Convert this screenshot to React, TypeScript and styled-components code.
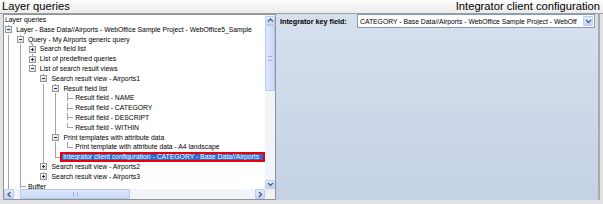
import React from 'react';
import styled, { createGlobalStyle, css } from 'styled-components';

const GlobalStyle = createGlobalStyle`
  html, body {
    margin: 0;
    padding: 0;
  }
  body {
    font-family: 'Liberation Sans', Arial, sans-serif;
    background: #e4e4e4;
  }
`;

const LINE = '#a3a3a3';
const ROW_H = 9.8;
const INDENT = 11.8;

type TreeNode = {
  label: string;
  open?: boolean;
  selected?: boolean;
  // more siblings follow below the visible part of the list
  more?: boolean;
  children?: TreeNode[];
};

const tree: TreeNode[] = [
  {
    label: 'Layer - Base Data//Airports - WebOffice Sample Project - WebOffice5_Sample',
    open: true,
    more: true,
    children: [
      {
        label: 'Query - My Airports generic query',
        open: true,
        children: [
          { label: 'Search field list', open: false, children: [] },
          { label: 'List of predefined queries', open: false, children: [] },
          {
            label: 'List of search result views',
            open: true,
            children: [
              {
                label: 'Search result view - Airports1',
                open: true,
                children: [
                  {
                    label: 'Result field list',
                    open: true,
                    children: [
                      { label: 'Result field - NAME' },
                      { label: 'Result field - CATEGORY' },
                      { label: 'Result field - DESCRIPT' },
                      { label: 'Result field - WITHIN' },
                    ],
                  },
                  {
                    label: 'Print templates with attribute data',
                    open: true,
                    children: [{ label: 'Print template with attribute data - A4 landscape' }],
                  },
                  {
                    label: 'Integrator client configuration - CATEGORY - Base Data//Airports',
                    selected: true,
                  },
                ],
              },
              { label: 'Search result view - Airports2', open: false, children: [] },
              { label: 'Search result view - Airports3', open: false, children: [] },
            ],
          },
        ],
      },
      { label: 'Buffer', more: true },
    ],
  },
];

type FlatRow = {
  node: TreeNode;
  guides: boolean[];
  hasNext: boolean;
};

function flatten(nodes: TreeNode[], guides: boolean[], out: FlatRow[]) {
  nodes.forEach((node, i) => {
    const hasNext = i < nodes.length - 1 || !!node.more;
    out.push({ node, guides, hasNext });
    if (node.open && node.children) {
      flatten(node.children, [...guides, hasNext], out);
    }
  });
  return out;
}

const rows = flatten(tree, [], []);

const Frame = styled.div`
  width: 603px;
  height: 204px;
  display: flex;
  flex-direction: column;
  background: #e2e2e2;
  overflow: hidden;
`;

const TitleBar = styled.div`
  flex: none;
  height: 13px;
  display: flex;
  justify-content: space-between;
  align-items: center;
  padding: 0 3px 0 2px;
  background: linear-gradient(#fdfdfd, #ececec);
  border-bottom: 1px solid #a0a0a0;
`;

const Title = styled.span`
  font-size: 11.2px;
  line-height: 13px;
  color: #000;
  white-space: nowrap;
`;

const Body = styled.div`
  flex: none;
  height: 186px;
  display: flex;
  padding: 0 3px 0 3px;
`;

const TreePane = styled.div`
  flex: none;
  width: 273px;
  height: 186px;
  box-sizing: border-box;
  border: 1px solid #8d939b;
  background: #fff;
  display: grid;
  grid-template-columns: minmax(0, 1fr) 10px;
  grid-template-rows: minmax(0, 1fr) 10px;
`;

const Viewport = styled.div`
  overflow: hidden;
  min-width: 0;
  min-height: 0;
`;

const Row = styled.div`
  display: flex;
  align-items: center;
  height: ${ROW_H}px;
  font-size: 6.8px;
  color: #000;
  white-space: nowrap;
`;

const Guide = styled.span<{ $line: boolean }>`
  flex: none;
  width: ${INDENT}px;
  align-self: stretch;
  ${(p) =>
    p.$line &&
    css`
      background: linear-gradient(${LINE}, ${LINE}) 4px 0 / 1px 100% no-repeat;
    `}
`;

const Branch = styled.span<{ $next: boolean; $leaf: boolean }>`
  flex: none;
  width: ${INDENT}px;
  align-self: stretch;
  display: flex;
  align-items: center;
  padding-left: 1px;
  box-sizing: border-box;
  background:
    linear-gradient(${LINE}, ${LINE}) 4px 0 / 1px 50% no-repeat,
    ${(p) => (p.$next ? `linear-gradient(${LINE}, ${LINE}) 4px 50% / 1px 50% no-repeat,` : '')}
    ${(p) => (p.$leaf ? `linear-gradient(${LINE}, ${LINE}) 4px 50% / 6px 1px no-repeat` : 'none')};
`;

const Expander = styled.span<{ $open: boolean }>`
  width: 7px;
  height: 7px;
  box-sizing: border-box;
  border: 1px solid #8e9aa8;
  background:
    linear-gradient(#24375a, #24375a) center / 3px 1px no-repeat,
    ${(p) => (p.$open ? '' : 'linear-gradient(#24375a, #24375a) center / 1px 3px no-repeat,')}
    linear-gradient(135deg, #ffffff, #d9d6cd);
`;

const Label = styled.span`
  padding-left: 0.4px;
  line-height: ${ROW_H}px;
`;

const RootLabel = styled(Label)`
  padding-left: 1px;
`;

const Selected = styled.span`
  flex: 1;
  min-width: 0;
  height: 10px;
  box-sizing: border-box;
  margin-left: -3px;
  padding-left: 1px;
  border: 2px solid #e8000b;
  background: #3169c6;
  color: #fff;
  line-height: 6px;
  overflow: hidden;
`;

const VScroll = styled.div`
  display: flex;
  flex-direction: column;
  min-height: 0;
  background: #f1f4f9;
`;

const HScroll = styled.div`
  display: flex;
  align-items: stretch;
  min-width: 0;
  background: #f1f4f9;
`;

const Corner = styled.div`
  background: #f3f1eb;
`;

const ArrowBtn = styled.div`
  flex: none;
  width: 10px;
  height: 9px;
  display: flex;
  align-items: center;
  justify-content: center;
  box-sizing: border-box;
  border: 1px solid #bccbe9;
  border-radius: 1px;
  background: linear-gradient(#e3ebfc, #c3d4f6);
`;

const Track = styled.div`
  flex: 1;
`;

const Thumb = styled.div<{ $dir: 'v' | 'h'; $offset: number; $size: number }>`
  flex: none;
  box-sizing: border-box;
  border: 1px solid #b7c8ea;
  border-radius: 1px;
  background: ${(p) =>
    p.$dir === 'v' ? 'linear-gradient(90deg, #dfe8fb, #c9d8f6)' : 'linear-gradient(#dfe8fb, #c9d8f6)'};
  display: flex;
  align-items: center;
  justify-content: center;
  ${(p) =>
    p.$dir === 'v'
      ? css`
          margin-top: ${p.$offset}px;
          height: ${p.$size}px;
        `
      : css`
          margin-left: ${p.$offset}px;
          width: ${p.$size}px;
        `}
`;

const Grip = styled.span<{ $dir: 'v' | 'h' }>`
  ${(p) =>
    p.$dir === 'v'
      ? css`
          width: 4px;
          height: 3px;
          border-top: 1px solid #9fb2d8;
          border-bottom: 1px solid #9fb2d8;
        `
      : css`
          width: 3px;
          height: 4px;
          border-left: 1px solid #9fb2d8;
          border-right: 1px solid #9fb2d8;
        `}
`;

const ConfigPane = styled.div`
  flex: 1;
  display: flex;
  flex-direction: column;
  padding: 0 3px 0 4px;
  background: linear-gradient(#d7e0ed, #c4d1e5);
  border-right: 2px solid #a9a9a9;
`;

const FieldRow = styled.div`
  display: flex;
  align-items: center;
  height: 14px;
`;

const FieldLabel = styled.span`
  flex: 1;
  font-size: 7.2px;
  font-weight: bold;
  color: #000;
  white-space: nowrap;
`;

const Select = styled.div`
  flex: none;
  width: 238px;
  height: 14px;
  box-sizing: border-box;
  border: 1px solid #7f9db9;
  background: #fff;
  display: flex;
  align-items: center;
`;

const SelectText = styled.span`
  flex: 1;
  min-width: 0;
  padding-left: 2px;
  margin-right: 4px;
  font-size: 6.8px;
  color: #000;
  white-space: nowrap;
  overflow: hidden;
`;

const DropBtn = styled(ArrowBtn)`
  margin-right: 1px;
  height: 10px;
`;

type Dir = 'up' | 'down' | 'left' | 'right';

function Chevron({ dir }: { dir: Dir }) {
  const pts: Record<Dir, string> = {
    up: '1,4.5 3.5,2 6,4.5',
    down: '1,2 3.5,4.5 6,2',
    left: '4.5,1 2,3.5 4.5,6',
    right: '2,1 4.5,3.5 2,6',
  };
  return (
    <svg width="7" height="7" viewBox="0 0 7 7">
      <polyline points={pts[dir]} fill="none" stroke="#4d6185" strokeWidth="1.4" />
    </svg>
  );
}

function TreeRow({ row }: { row: FlatRow }) {
  const { node, guides, hasNext } = row;
  const leaf = !node.children;
  return (
    <Row>
      {guides.map((g, i) => (
        <Guide key={i} $line={g} />
      ))}
      <Branch $next={hasNext} $leaf={leaf}>
        {!leaf && <Expander $open={!!node.open} />}
      </Branch>
      {node.selected ? <Selected>{node.label}</Selected> : <Label>{node.label}</Label>}
    </Row>
  );
}

export default function App() {
  return (
    <>
      <GlobalStyle />
      <Frame>
        <TitleBar>
          <Title>Layer queries</Title>
          <Title>Integrator client configuration</Title>
        </TitleBar>
        <Body>
          <TreePane>
            <Viewport>
              <Row>
                <RootLabel>Layer queries</RootLabel>
              </Row>
              {rows.map((r, i) => (
                <TreeRow key={i} row={r} />
              ))}
            </Viewport>
            <VScroll>
              <ArrowBtn style={{ marginTop: 1 }}>
                <Chevron dir="up" />
              </ArrowBtn>
              <Thumb $dir="v" $offset={0} $size={66}>
                <Grip $dir="v" />
              </Thumb>
              <Track />
              <ArrowBtn>
                <Chevron dir="down" />
              </ArrowBtn>
            </VScroll>
            <HScroll>
              <ArrowBtn style={{ height: 10 }}>
                <Chevron dir="left" />
              </ArrowBtn>
              <Thumb $dir="h" $offset={6} $size={110}>
                <Grip $dir="h" />
              </Thumb>
              <Track />
              <ArrowBtn style={{ height: 10 }}>
                <Chevron dir="right" />
              </ArrowBtn>
            </HScroll>
            <Corner />
          </TreePane>
          <ConfigPane>
            <FieldRow>
              <FieldLabel>Integrator key field:</FieldLabel>
              <Select>
                <SelectText>CATEGORY - Base Data//Airports - WebOffice Sample Project - WebOff</SelectText>
                <DropBtn>
                  <Chevron dir="down" />
                </DropBtn>
              </Select>
            </FieldRow>
          </ConfigPane>
        </Body>
      </Frame>
    </>
  );
}
